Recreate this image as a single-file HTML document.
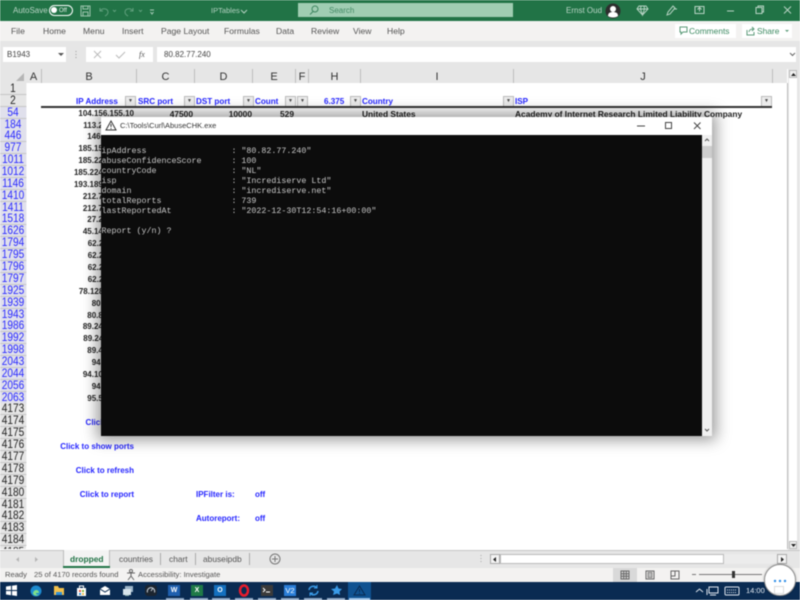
<!DOCTYPE html>
<html lang="en">
<head>
<meta charset="utf-8">
<title>IPTables</title>
<style>
html,body{margin:0;padding:0;width:800px;height:600px;overflow:hidden;background:#fff}
#r{position:relative;width:800px;height:600px;overflow:hidden;font-family:"Liberation Sans",sans-serif;filter:blur(.4px)}
#r div,#r span.a{position:absolute;white-space:nowrap}
.t{line-height:12px;height:12px}
.rh{left:0;width:29.500px;height:11px;background:#e6e6e6;border-bottom:1px solid #c6c6c6;text-align:center;font-size:11.500px;line-height:12px;color:#222;transform:scaleX(.88);transform-origin:0 0}
.rh.b{color:#2a2aff;background:#e0e0ec}
.ch{top:69px;height:14px;background:#e6e6e6;border-right:1px solid #bdbdbd;text-align:center;font-size:11px;line-height:16px;color:#333}
.h{font-size:8.100px;font-weight:bold;color:#2525ff;line-height:12px;top:95.500px}
.d{font-size:8.400px;font-weight:bold;color:#222;line-height:12px}
.ip{font-size:8px;font-weight:bold;color:#222;line-height:12px;right:666px;text-align:right;margin-top:1px}
.bl{font-size:8px;font-weight:bold;color:#2525ff;line-height:12px;margin-top:1.500px}
.fb{top:96px;width:9px;height:9px;background:#ececec;border:1px solid #bbb;text-align:center;font-size:5px;line-height:9px;color:#444}
#r .mn{left:101.500px;font-family:"Liberation Mono",monospace;font-size:8.330px;line-height:10px;color:#c8c8c8;white-space:pre}
.rb{font-size:8.600px;color:#555;top:25px;line-height:12px}
.st{font-size:7.600px;color:#555;line-height:10px;top:570px}
.tab{font-size:8.400px;color:#555;line-height:12px;top:553px}
.ul{top:598px;height:2px;width:18px;background:#8ea7c5}
</style>
</head>
<body>
<div id="r">
<!-- title bar -->
<div style="left:0;top:0;width:800px;height:21px;background:#217346"></div>
<div class="t" style="left:13px;top:5px;font-size:8px;color:#b9d4c5">AutoSave</div>
<div style="left:49px;top:5px;width:22px;height:9px;border:1px solid #fff;border-radius:6px"></div>
<div style="left:51px;top:7px;width:6px;height:6px;background:#fff;border-radius:50%"></div>
<div class="t" style="left:59px;top:5px;font-size:6px;color:#e4efe8">Off</div>
<svg style="position:absolute;left:80px;top:5px" width="90" height="12" fill="none" stroke="#9cc3ad" stroke-width="1">
<rect x="1" y="1" width="9" height="10"/><path d="M3 1v3h5V1M3 11V7h5v4"/>
<path d="M20 3v3h3M20 6c3-4 8-2 8 1 0 2-1 3-3 4" stroke="#5f9f7c"/><path d="M33 5l1.500 1.500L36 5" stroke="#5f9f7c"/>
<path d="M53 3v3h-3M53 6c-3-4-8-2-8 1 0 2 1 3 3 4" stroke="#5f9f7c"/><path d="M59 5l1.500 1.500L62 5" stroke="#5f9f7c"/>
<path d="M70 5h4M70.500 7l1.500 2 1.500-2" stroke="#a8cbb8"/>
</svg>
<div class="t" style="left:211px;top:5px;font-size:7.500px;color:#b3d1c0">IPTables</div>
<svg style="position:absolute;left:240px;top:9px" width="8" height="5" fill="none" stroke="#b3d1c0"><path d="M1 1l3 3 3-3"/></svg>
<div style="left:298px;top:3px;width:215px;height:14px;background:#a0cdb2"></div>
<svg style="position:absolute;left:309px;top:5px" width="10" height="10" fill="none" stroke="#3e8660"><circle cx="6" cy="4" r="3"/><path d="M4 6.500L1 9.500"/></svg>
<div class="t" style="left:329px;top:5px;font-size:8px;color:#458a66">Search</div>
<div class="t" style="left:566px;top:5px;font-size:8px;color:#b9d4c5">Ernst Oud</div>
<svg style="position:absolute;left:605px;top:3px" width="16" height="16"><circle cx="8" cy="8" r="7.500" fill="#2e2e2e"/><circle cx="8" cy="6" r="3" fill="#fff"/><path d="M3 13c0-3 2-4 5-4s5 1 5 4c-2 2-8 2-10 0z" fill="#fff"/></svg>
<svg style="position:absolute;left:636px;top:4px" width="160" height="13" fill="none" stroke="#b7d3c3" stroke-width="1">
<path d="M3 2h7l2 3-5.500 6L1 5zM1 5h11M5 2L4.500 5l2 6 2-6L8 2"/>
<path d="M31 11l1-3 5-6 2 2-5 6zM38 5l3 0" />
<rect x="59" y="2.500" width="9" height="7"/><path d="M63.500 3.500v4M61.500 5.500l2-2 2 2" />
<path d="M91 7h7"/>
<rect x="120" y="3.500" width="6" height="6"/><path d="M122 3.500V2h5.500v6H126"/>
<path d="M148 2.500l7 7M155 2.500l-7 7"/>
</svg>

<!-- ribbon tabs -->
<div style="left:0;top:21px;width:800px;height:20px;background:#f3f2f1"></div>
<div class="rb" style="left:11px">File</div>
<div class="rb" style="left:43px">Home</div>
<div class="rb" style="left:83px">Menu</div>
<div class="rb" style="left:122px">Insert</div>
<div class="rb" style="left:161px">Page Layout</div>
<div class="rb" style="left:224px">Formulas</div>
<div class="rb" style="left:276px">Data</div>
<div class="rb" style="left:311px">Review</div>
<div class="rb" style="left:353px">View</div>
<div class="rb" style="left:387px">Help</div>
<div style="left:675px;top:24px;width:61px;height:14px;background:#fff"></div>
<svg style="position:absolute;left:679px;top:26px" width="9" height="10" fill="none" stroke="#5a9a78"><path d="M1 1h7v5H4L2 8V6H1z"/></svg>
<div class="rb" style="left:689px;color:#3d8a62;font-size:8.400px">Comments</div>
<div style="left:742px;top:24px;width:50px;height:14px;background:#fff"></div>
<svg style="position:absolute;left:746px;top:26px" width="9" height="10" fill="none" stroke="#5a9a78"><path d="M1 4v5h7V6M3 6c0-2 2-3 4-3M6 1l2 2-2 2"/></svg>
<div class="rb" style="left:757px;color:#3d8a62;font-size:8.400px">Share</div>
<svg style="position:absolute;left:784px;top:29px" width="6" height="4"><path d="M1 1h4L3 3z" fill="#5a9a78"/></svg>

<!-- formula bar -->
<div style="left:0;top:41px;width:800px;height:28px;background:#e6e6e6"></div>
<div style="left:3px;top:47px;width:63px;height:15px;background:#fff"></div>
<div class="t" style="left:7px;top:49px;font-size:8px;color:#444">B1943</div>
<svg style="position:absolute;left:58px;top:53px" width="6" height="4"><path d="M0 0h6L3 3z" fill="#555"/></svg>
<svg style="position:absolute;left:75px;top:50px" width="4" height="10"><path d="M1 1v1M1 4v1M1 7v1" stroke="#999"/></svg>
<div style="left:86px;top:47px;width:67px;height:15px;background:#fff"></div>
<svg style="position:absolute;left:93px;top:50px" width="36" height="10" fill="none" stroke="#bbb"><path d="M1 1l7 7M8 1L1 8"/><path d="M23 5l3 3 6-6"/></svg>
<div class="t" style="left:139px;top:49px;font-size:8px;font-style:italic;font-family:'Liberation Serif',serif;color:#555">fx</div>
<div style="left:157px;top:47px;width:639px;height:15px;background:#fff"></div>
<div class="t" style="left:164px;top:49px;font-size:8px;color:#444">80.82.77.240</div>
<svg style="position:absolute;left:789px;top:52px" width="7" height="5" fill="none" stroke="#666"><path d="M1 1l2.500 2.500L6 1"/></svg>

<!-- column headers -->
<div style="left:0;top:69px;width:787px;height:14px;background:#e6e6e6"></div>
<svg style="position:absolute;left:16px;top:73px" width="9" height="9"><path d="M8 0v8H0z" fill="#b5b5b5"/></svg>
<div class="ch" style="left:26px;width:15px">A</div>
<div class="ch" style="left:42px;width:94px">B</div>
<div class="ch" style="left:137px;width:57px">C</div>
<div class="ch" style="left:195px;width:57px">D</div>
<div class="ch" style="left:253px;width:42px">E</div>
<div class="ch" style="left:296px;width:12px">F</div>
<div class="ch" style="left:309px;width:51px">H</div>
<div class="ch" style="left:361px;width:152px">I</div>
<div class="ch" style="left:514px;width:258px">J</div>

<!-- sheet area -->
<div style="left:26px;top:83px;width:761px;height:466px;background:#fff;border-right:1px solid #bdbdbd"></div>
<div style="left:0;top:83px;width:26px;height:466px;background:#e6e6e6;overflow:hidden"></div>
<div class="rh" style="top:83px">1</div>
<div class="rh" style="top:95px">2</div>
<div class="rh b" style="top:107px">54</div>
<div class="rh b" style="top:119px">184</div>
<div class="rh b" style="top:130px">446</div>
<div class="rh b" style="top:142px">977</div>
<div class="rh b" style="top:154px">1011</div>
<div class="rh b" style="top:166px">1012</div>
<div class="rh b" style="top:178px">1146</div>
<div class="rh b" style="top:190px">1410</div>
<div class="rh b" style="top:202px">1411</div>
<div class="rh b" style="top:213px">1518</div>
<div class="rh b" style="top:225px">1626</div>
<div class="rh b" style="top:237px">1794</div>
<div class="rh b" style="top:249px">1795</div>
<div class="rh b" style="top:261px">1796</div>
<div class="rh b" style="top:273px">1797</div>
<div class="rh b" style="top:285px">1925</div>
<div class="rh b" style="top:297px">1939</div>
<div class="rh b" style="top:309px">1943</div>
<div class="rh b" style="top:320px">1986</div>
<div class="rh b" style="top:332px">1992</div>
<div class="rh b" style="top:344px">1998</div>
<div class="rh b" style="top:356px">2043</div>
<div class="rh b" style="top:368px">2044</div>
<div class="rh b" style="top:380px">2056</div>
<div class="rh b" style="top:392px">2063</div>
<div class="rh" style="top:403px">4173</div>
<div class="rh" style="top:415px">4174</div>
<div class="rh" style="top:427px">4175</div>
<div class="rh" style="top:439px">4176</div>
<div class="rh" style="top:451px">4177</div>
<div class="rh" style="top:463px">4178</div>
<div class="rh" style="top:475px">4179</div>
<div class="rh" style="top:487px">4180</div>
<div class="rh" style="top:499px">4181</div>
<div class="rh" style="top:510px">4182</div>
<div class="rh" style="top:522px">4183</div>
<div class="rh" style="top:534px">4184</div>
<div style="left:0;top:546px;width:26px;height:3px;overflow:hidden;font-size:10px;line-height:12px;text-align:center;color:#222">4185</div>

<!-- headers row -->
<div class="h" style="left:76px">IP Address</div>
<div class="fb" style="left:125px">▼</div>
<div class="h" style="left:138px">SRC port</div>
<div class="fb" style="left:184px">▼</div>
<div class="h" style="left:196px">DST port</div>
<div class="fb" style="left:243px">▼</div>
<div class="h" style="left:255px">Count</div>
<div class="fb" style="left:285px">▼</div>
<div class="fb" style="left:297px">▼</div>
<div class="h" style="left:324px">6.375</div>
<div class="fb" style="left:350px">▼</div>
<div class="h" style="left:362px">Country</div>
<div class="fb" style="left:503px">▼</div>
<div class="h" style="left:515px">ISP</div>
<div class="fb" style="left:761px">▼</div>
<div style="left:41px;top:106px;width:731px;height:1.500px;background:#333"></div>

<!-- data -->
<div class="ip" style="top:107px">104.156.155.10</div>
<div class="d" style="top:108px;right:607px">47500</div>
<div class="d" style="top:108px;right:548px">10000</div>
<div class="d" style="top:108px;right:506px">529</div>
<div class="d" style="top:108px;left:362px">United States</div>
<div class="d" style="top:108px;left:515px">Academy of Internet Research Limited Liability Company</div>
<div class="ip" style="top:119px">113.213.55.12</div>
<div class="ip" style="top:130px">146.70.85.52</div>
<div class="ip" style="top:142px">185.153.199.10</div>
<div class="ip" style="top:154px">185.220.101.45</div>
<div class="ip" style="top:166px">185.224.128.121</div>
<div class="ip" style="top:178px">193.189.100.204</div>
<div class="ip" style="top:190px">212.70.149.14</div>
<div class="ip" style="top:202px">212.70.149.15</div>
<div class="ip" style="top:213px">27.221.54.69</div>
<div class="ip" style="top:225px">45.143.200.10</div>
<div class="ip" style="top:237px">62.210.11.40</div>
<div class="ip" style="top:249px">62.210.11.41</div>
<div class="ip" style="top:261px">62.210.11.42</div>
<div class="ip" style="top:273px">62.210.11.43</div>
<div class="ip" style="top:285px">78.128.113.130</div>
<div class="ip" style="top:297px">80.66.76.18</div>
<div class="ip" style="top:309px">80.82.77.240</div>
<div class="ip" style="top:320px">89.248.163.10</div>
<div class="ip" style="top:332px">89.248.163.11</div>
<div class="ip" style="top:344px">89.42.231.33</div>
<div class="ip" style="top:356px">94.73.22.14</div>
<div class="ip" style="top:368px">94.102.61.141</div>
<div class="ip" style="top:380px">94.73.22.15</div>
<div class="ip" style="top:392px">95.57.218.35</div>
<div class="bl" style="top:415px;right:666px">Click to filter</div>
<div class="bl" style="top:439px;right:666px">Click to show ports</div>
<div class="bl" style="top:463px;right:666px">Click to refresh</div>
<div class="bl" style="top:487px;right:666px">Click to report</div>
<div class="bl" style="top:487px;left:196px">IPFilter is:</div>
<div class="bl" style="top:487px;left:255px">off</div>
<div class="bl" style="top:511px;left:196px">Autoreport:</div>
<div class="bl" style="top:511px;left:255px">off</div>

<!-- right scrollbar -->
<div style="left:788px;top:69px;width:12px;height:481px;background:#e6e6e6"></div>
<div style="left:789px;top:70px;width:8px;height:479px;background:#fff"></div>
<div style="left:789px;top:70px;width:8px;height:8px;background:#f0f0f0;border:1px solid #bbb;box-sizing:border-box"></div>
<svg style="position:absolute;left:791px;top:73px" width="5" height="3"><path d="M0 3h5L2.500 0z" fill="#222"/></svg>
<div style="left:789px;top:541px;width:8px;height:8px;background:#f0f0f0;border:1px solid #bbb;box-sizing:border-box"></div>
<svg style="position:absolute;left:791px;top:544px" width="5" height="3"><path d="M0 0h5L2.500 3z" fill="#222"/></svg>

<!-- console window -->
<div style="left:101px;top:117px;width:611px;height:319px;background:#0c0c0c;box-shadow:0 0 14px 4px rgba(0,0,0,.4)"></div>
<div style="left:101px;top:117px;width:611px;height:18px;background:#fff"></div>
<svg style="position:absolute;left:105px;top:120px" width="12" height="11" fill="none" stroke="#333"><path d="M6 1L1 10h10zM6 4v3M6 8v1"/></svg>
<div class="t" style="left:120px;top:120px;font-size:7.500px;color:#333">C:\Tools\Curl\AbuseCHK.exe</div>
<svg style="position:absolute;left:636px;top:121px" width="70" height="10" fill="none" stroke="#444"><path d="M1 5h8"/><rect x="29.500" y="1.500" width="6" height="6"/><path d="M58 1.500l6.500 6.500M64.500 1.500L58 8"/></svg>
<div style="left:702px;top:135px;width:10px;height:301px;background:#f0f0f0"></div>
<svg style="position:absolute;left:704px;top:138px" width="6" height="4" fill="none" stroke="#555"><path d="M1 3l2-2 2 2"/></svg>
<div style="left:702px;top:146px;width:10px;height:12px;background:#cdcdcd"></div>
<svg style="position:absolute;left:704px;top:428px" width="6" height="4" fill="none" stroke="#555"><path d="M1 1l2 2 2-2"/></svg>
<div class="mn" style="top:146px">ipAddress                 : "80.82.77.240"</div>
<div class="mn" style="top:156px">abuseConfidenceScore      : 100</div>
<div class="mn" style="top:166px">countryCode               : "NL"</div>
<div class="mn" style="top:176px">isp                       : "Incrediserve Ltd"</div>
<div class="mn" style="top:186px">domain                    : "incrediserve.net"</div>
<div class="mn" style="top:196px">totalReports              : 739</div>
<div class="mn" style="top:206px">lastReportedAt            : "2022-12-30T12:54:16+00:00"</div>
<div class="mn" style="top:226px">Report (y/n) ?</div>

<!-- sheet tabs -->
<div style="left:0;top:550px;width:800px;height:18px;background:#e6e6e6;border-top:1px solid #c6c6c6;box-sizing:border-box"></div>
<svg style="position:absolute;left:16px;top:556px" width="24" height="7"><path d="M3 1L0 3.500 3 6zM19 1l3 2.500L19 6z" fill="#b5b5b5"/></svg>
<div style="left:63px;top:550px;width:47px;height:18px;background:#f3f3f3;border-left:1px solid #bbb;border-right:1px solid #bbb;box-sizing:border-box"></div>
<div style="left:63px;top:566px;width:47px;height:2px;background:#217346"></div>
<div class="tab" style="left:70px;color:#217346;font-weight:bold">dropped</div>
<div class="tab" style="left:119px">countries</div>
<div style="left:160px;top:553px;width:1px;height:12px;background:#aaa"></div>
<div class="tab" style="left:169px">chart</div>
<div style="left:195px;top:553px;width:1px;height:12px;background:#aaa"></div>
<div class="tab" style="left:203px">abuseipdb</div>
<div style="left:249px;top:553px;width:1px;height:12px;background:#aaa"></div>
<svg style="position:absolute;left:269px;top:553px" width="12" height="12" fill="none" stroke="#777"><circle cx="6" cy="6" r="5"/><path d="M3 6h6M6 3v6"/></svg>
<svg style="position:absolute;left:480px;top:554px" width="4" height="10"><path d="M1 1v1M1 4v1M1 7v1" stroke="#aaa"/></svg>
<div style="left:490px;top:554px;width:297px;height:10px;background:#ececec"></div>
<div style="left:490px;top:554px;width:10px;height:10px;background:#f4f4f4;border:1px solid #aaa;box-sizing:border-box"></div>
<svg style="position:absolute;left:493px;top:557px" width="4" height="5"><path d="M3 0v5L0 2.500z" fill="#222"/></svg>
<div style="left:500px;top:554px;width:224px;height:10px;background:#fff;border:1px solid #bbb;box-sizing:border-box"></div>
<div style="left:777px;top:554px;width:10px;height:10px;background:#f4f4f4;border:1px solid #aaa;box-sizing:border-box"></div>
<svg style="position:absolute;left:781px;top:557px" width="4" height="5"><path d="M0 0v5l3-2.500z" fill="#222"/></svg>

<!-- status bar -->
<div style="left:0;top:568px;width:800px;height:14px;background:#f3f2f1"></div>
<div class="st" style="left:5px">Ready</div>
<div class="st" style="left:34px">25 of 4170 records found</div>
<svg style="position:absolute;left:126px;top:569px" width="10" height="12" fill="none" stroke="#666"><circle cx="5" cy="2" r="1.500"/><path d="M1 4h8M5 4v3M5 7l-3 4M5 7l3 4"/></svg>
<div class="st" style="left:138px">Accessibility: Investigate</div>
<div style="left:613px;top:568px;width:24px;height:14px;background:#d9d9d9"></div>
<svg style="position:absolute;left:620px;top:570px" width="66" height="10" fill="none" stroke="#666">
<rect x="1" y="1" width="8" height="8"/><path d="M1 3.700h8M1 6.300h8M3.700 1v8M6.300 1v8"/>
<rect x="26" y="1" width="8" height="8"/><rect x="28" y="2.500" width="4" height="5" fill="#bbb" stroke="#888"/>
<rect x="51" y="1" width="8" height="8"/><path d="M51 6h4V1"/>
</svg>
<div style="left:692px;top:574px;width:4px;height:1px;background:#777"></div>
<div style="left:699px;top:574px;width:63px;height:1px;background:#777"></div>
<div style="left:732px;top:571px;width:3px;height:7px;background:#333"></div>

<!-- taskbar -->
<div style="left:0;top:582px;width:800px;height:18px;background:#0a2b52"></div>
<div style="left:348px;top:582px;width:23px;height:18px;background:#0f5291"></div>
<svg style="position:absolute;left:6px;top:585px" width="11" height="11"><path d="M0 1.500l5-.7V5H0zM6 .7L11 0v5H6zM0 6h5v4.200L0 9.500zM6 6h5v5l-5-.7z" fill="#fff"/></svg>
<svg style="position:absolute;left:30px;top:585px" width="12" height="12"><circle cx="6" cy="6" r="5.500" fill="#1c8ad0"/><path d="M3 8c1-4 6-4 6 0H6c0 2 2 2 3 1-1 2.500-6 2-6-1z" fill="#7fe08a"/></svg>
<svg style="position:absolute;left:53px;top:585px" width="12" height="11"><path d="M1 1h4l1 2h5v7H1z" fill="#f2c04c"/><rect x="3" y="7" width="6" height="3" fill="#2e8fd8"/></svg>
<svg style="position:absolute;left:76px;top:585px" width="11" height="11"><rect x="1" y="3" width="9" height="8" fill="#fff"/><path d="M3.500 3V1h4v2" stroke="#fff" fill="none"/><rect x="3" y="5" width="2" height="2" fill="#e8543c"/><rect x="6" y="5" width="2" height="2" fill="#7cb83e"/><rect x="3" y="8" width="2" height="2" fill="#2e8fd8"/><rect x="6" y="8" width="2" height="2" fill="#f2c04c"/></svg>
<svg style="position:absolute;left:99px;top:585px" width="12" height="11"><path d="M1 4l5-3 5 3v6H1z" fill="#fff"/><path d="M1 4l5 3 5-3" stroke="#0a2b52" fill="none"/></svg>
<svg style="position:absolute;left:122px;top:585px" width="12" height="12"><rect x="3" y="1" width="8" height="6" fill="#9cb4c8"/><rect x="1" y="4" width="8" height="6" fill="#d7e4ec"/><rect x="3" y="10" width="4" height="1" fill="#8aa"/></svg>
<svg style="position:absolute;left:145px;top:584px" width="12" height="13"><rect x="0" y="1" width="12" height="11" rx="3" fill="#1c2530"/><path d="M2.500 8.500a3.700 3.700 0 1 1 7 0" stroke="#c8d0d8" fill="none"/><path d="M6 7l2-3" stroke="#c8d0d8"/></svg>
<div style="left:168px;top:585px;width:12px;height:11px;background:#1f5fae;text-align:center;color:#fff;font-size:7px;font-weight:bold;line-height:11px">W</div>
<div style="left:191px;top:585px;width:12px;height:11px;background:#1f7a47;text-align:center;color:#fff;font-size:7px;font-weight:bold;line-height:11px">X</div>
<div style="left:214px;top:585px;width:12px;height:11px;background:#1470bf;text-align:center;color:#fff;font-size:7px;font-weight:bold;line-height:11px">O</div>
<svg style="position:absolute;left:238px;top:584px" width="12" height="13"><ellipse cx="6" cy="6.500" rx="4" ry="5" fill="none" stroke="#e81c2c" stroke-width="2.500"/></svg>
<div style="left:261px;top:585px;width:12px;height:11px;background:#3a3a3a"></div>
<svg style="position:absolute;left:262px;top:587px" width="9" height="6" fill="none" stroke="#fff"><path d="M1 1l2 2-2 2M4 5h4"/></svg>
<div style="left:284px;top:585px;width:12px;height:11px;background:#2a7ed8;text-align:center;color:#fff;font-size:7.500px;line-height:11px">V2</div>
<svg style="position:absolute;left:307px;top:584px" width="13" height="13" fill="none" stroke="#3a9be8" stroke-width="1.500"><path d="M2 6a4.500 4.500 0 0 1 8-2M11 7a4.500 4.500 0 0 1-8 2"/><path d="M10 1v3H7M3 12V9h3" stroke-width="1"/></svg>
<svg style="position:absolute;left:331px;top:585px" width="11" height="11"><path d="M6 0l1.500 3.500L11 4 8.500 6.500 9 10 6 8.500 2 10l1-3.500L0 4l4-.5z" fill="#3a9be8"/></svg>
<svg style="position:absolute;left:353px;top:585px" width="13" height="11" fill="none" stroke="#0a2b52"><path d="M6.500 1L1 10h11zM6.500 4v3M6.500 8v1"/></svg>
<div class="ul" style="left:166px"></div>
<div class="ul" style="left:190px"></div>
<div class="ul" style="left:212px"></div>
<div class="ul" style="left:235px"></div>
<div class="ul" style="left:258px"></div>
<div class="ul" style="left:281px"></div>
<div class="ul" style="left:304px"></div>
<div class="ul" style="left:327px"></div>
<div class="ul" style="left:349px;width:21px;background:#9fc3e8"></div>
<svg style="position:absolute;left:695px;top:586px" width="50" height="11" fill="none" stroke="#dfe6ee">
<path d="M1 6l3.500-3L8 6"/>
<rect x="14" y="1" width="9" height="6"/><path d="M15 9h6M12 3v6"/>
<rect x="30" y="1" width="14" height="8" rx="1"/><path d="M32 4h10M32 6.500h10" stroke-dasharray="1 1"/>
</svg>
<div class="t" style="left:746px;top:585px;font-size:7.500px;color:#e6edf4">14:00</div>

<!-- touch circle -->
<div style="left:764px;top:564px;width:30px;height:30px;border-radius:50%;background:#fff;border:1px solid #8f8f8f;box-shadow:0 0 2px rgba(0,0,0,.3)"></div>
<svg style="position:absolute;left:773px;top:579px" width="14" height="4"><circle cx="2" cy="2" r="1.200" fill="#2f8ee8"/><circle cx="7" cy="2" r="1.200" fill="#2f8ee8"/><circle cx="12" cy="2" r="1.200" fill="#2f8ee8"/></svg>
<div style="left:774px;top:586px;width:10px;height:8px;border:1px solid #dcdcdc;box-sizing:border-box"></div>
</div>
</body>
</html>
